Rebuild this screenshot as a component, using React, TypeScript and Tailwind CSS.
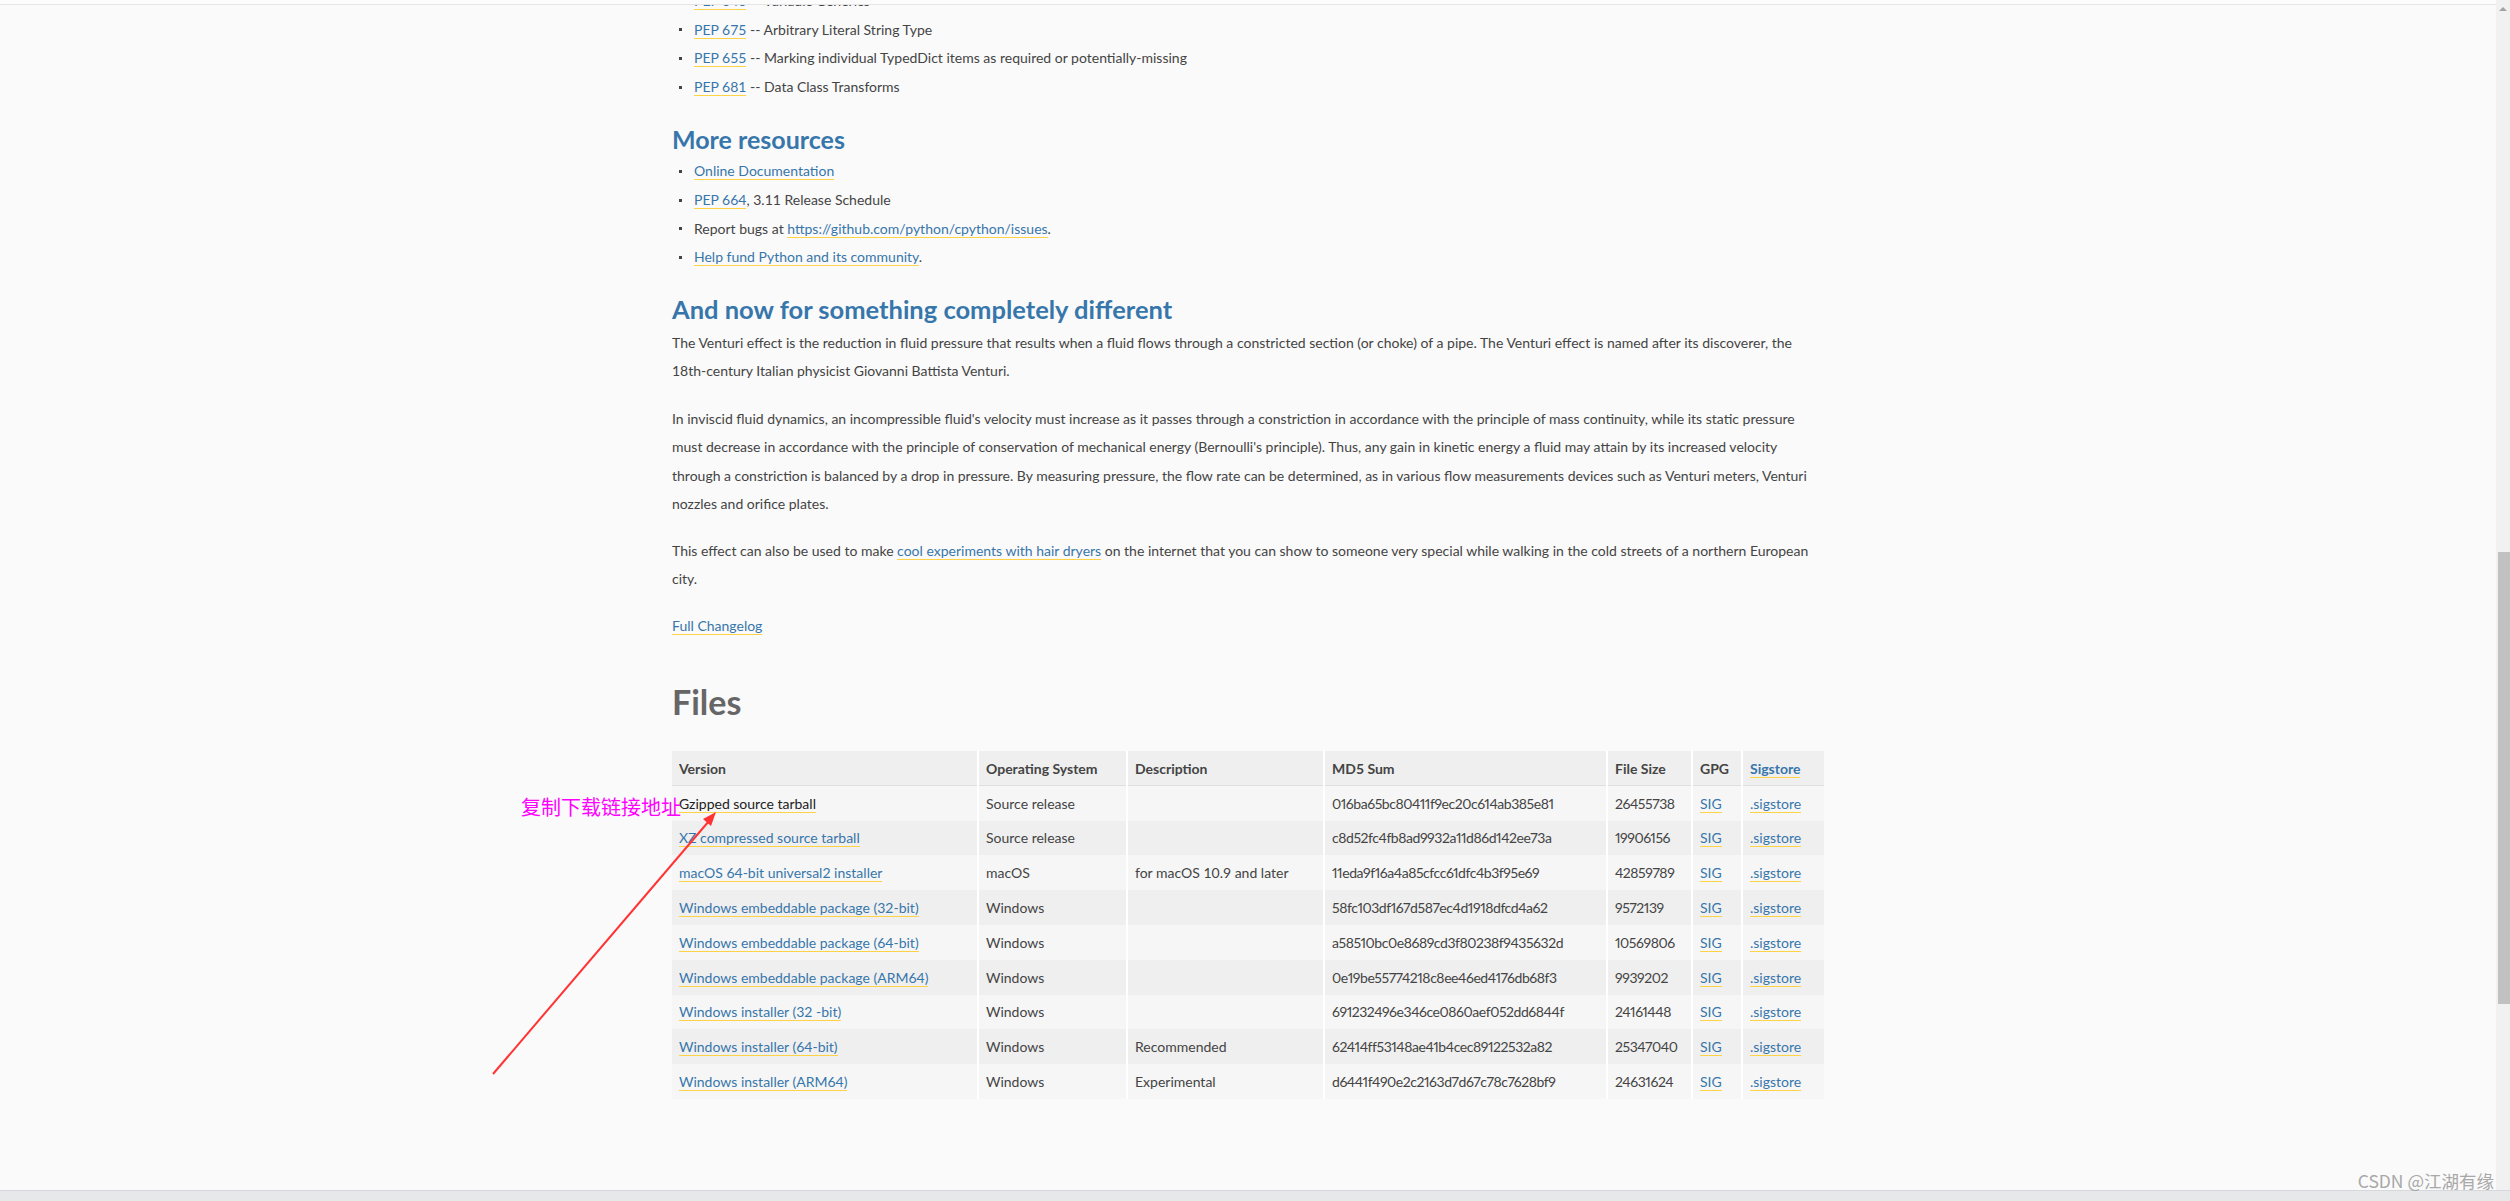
import React from "react";

type FileRow = {
  version: string;
  os: string;
  description: string;
  md5: string;
  size: string;
};

const files: FileRow[] = [
  { version: "Gzipped source tarball", os: "Source release", description: "", md5: "016ba65bc80411f9ec20c614ab385e81", size: "26455738" },
  { version: "XZ compressed source tarball", os: "Source release", description: "", md5: "c8d52fc4fb8ad9932a11d86d142ee73a", size: "19906156" },
  { version: "macOS 64-bit universal2 installer", os: "macOS", description: "for macOS 10.9 and later", md5: "11eda9f16a4a85cfcc61dfc4b3f95e69", size: "42859789" },
  { version: "Windows embeddable package (32-bit)", os: "Windows", description: "", md5: "58fc103df167d587ec4d1918dfcd4a62", size: "9572139" },
  { version: "Windows embeddable package (64-bit)", os: "Windows", description: "", md5: "a58510bc0e8689cd3f80238f9435632d", size: "10569806" },
  { version: "Windows embeddable package (ARM64)", os: "Windows", description: "", md5: "0e19be55774218c8ee46ed4176db68f3", size: "9939202" },
  { version: "Windows installer (32 -bit)", os: "Windows", description: "", md5: "691232496e346ce0860aef052dd6844f", size: "24161448" },
  { version: "Windows installer (64-bit)", os: "Windows", description: "Recommended", md5: "62414ff53148ae41b4cec89122532a82", size: "25347040" },
  { version: "Windows installer (ARM64)", os: "Windows", description: "Experimental", md5: "d6441f490e2c2163d7d67c78c7628bf9", size: "24631624" },
];

const peps = [
  ["PEP 646", "Variadic Generics"],
  ["PEP 675", "Arbitrary Literal String Type"],
  ["PEP 655", "Marking individual TypedDict items as required or potentially-missing"],
  ["PEP 681", "Data Class Transforms"],
];

const Link = ({ children, dark = false }: { children: React.ReactNode; dark?: boolean }) => (
  <a className={`border-b border-[#ffd343] ${dark ? "text-[#222]" : "text-[#3776ab]"}`}>{children}</a>
);

const Item = ({ children }: { children: React.ReactNode }) => (
  <li className="flex h-[28.6px] items-center leading-[28.6px]">
    <span className="ml-[7px] mr-[12px] h-[3px] w-[3px] shrink-0 bg-[#444]" />
    <span className="whitespace-nowrap">{children}</span>
  </li>
);

const Heading = ({ children }: { children: React.ReactNode }) => (
  <h2 className="mt-[22px] mb-[2px] text-[25px] font-bold leading-[32px] text-[#3776ab]">{children}</h2>
);

const Scrollbar = () => (
  <div className="flex w-[14px] shrink-0 flex-col bg-[#f1f1f1]">
    <div className="flex h-[17px] items-center justify-center">
      <div className="h-0 w-0 border-x-[4px] border-b-[4px] border-x-transparent border-b-[#a3a3a3]" />
    </div>
    <div className="h-[535px]" />
    <div className="ml-[2px] h-[452px] w-[12px] bg-[#c1c1c1]" />
  </div>
);

export default function App() {
  return (
    <div className="relative flex h-[1201px] w-[2510px] flex-col overflow-hidden bg-[#fafafa] font-[Lato,sans-serif] text-[14px] text-[#444]">
      <div className="flex min-h-0 flex-1">
        <div className="flex min-w-0 flex-1 flex-col">
          <div className="h-[5px] shrink-0 border-b border-[#e6e6e6] bg-[#fcfcfc]" />
          <div className="min-h-0 flex-1 overflow-hidden">
            <div className="mx-auto w-[1152px]">
              <ul className="mt-[-18px]">
                {peps.map(([pep, title]) => (
                  <Item key={pep}>
                    <Link>{pep}</Link> -- {title}
                  </Item>
                ))}
              </ul>

              <Heading>More resources</Heading>
              <ul>
                <Item>
                  <Link>Online Documentation</Link>
                </Item>
                <Item>
                  <Link>PEP 664</Link>, 3.11 Release Schedule
                </Item>
                <Item>
                  Report bugs at <Link>https://github.com/python/cpython/issues</Link>.
                </Item>
                <Item>
                  <Link>Help fund Python and its community</Link>.
                </Item>
              </ul>

              <h2 className="mt-[21px] mb-[2px] text-[25.5px] font-bold leading-[32px] text-[#3776ab]">
                And now for something completely different
              </h2>
              <p className="mt-[4px] whitespace-nowrap leading-[28.5px]">
                The Venturi effect is the reduction in fluid pressure that results when a fluid flows through a constricted section (or choke) of a pipe. The Venturi effect is named after its discoverer, the
                <br />
                18th-century Italian physicist Giovanni Battista Venturi.
              </p>
              <p className="mt-[19px] whitespace-nowrap leading-[28.5px]">
                In inviscid fluid dynamics, an incompressible fluid's velocity must increase as it passes through a constriction in accordance with the principle of mass continuity, while its static pressure
                <br />
                must decrease in accordance with the principle of conservation of mechanical energy (Bernoulli's principle). Thus, any gain in kinetic energy a fluid may attain by its increased velocity
                <br />
                through a constriction is balanced by a drop in pressure. By measuring pressure, the flow rate can be determined, as in various flow measurements devices such as Venturi meters, Venturi
                <br />
                nozzles and orifice plates.
              </p>
              <p className="mt-[18px] whitespace-nowrap leading-[28.5px]">
                This effect can also be used to make <Link>cool experiments with hair dryers</Link> on the internet that you can show to someone very special while walking in the cold streets of a northern European
                <br />
                city.
              </p>
              <p className="mt-[18px] leading-[28.5px]">
                <Link>Full Changelog</Link>
              </p>

              <h2 className="mt-[39.5px] text-[34px] font-bold leading-[44px] text-[#666]">Files</h2>

              <table className="mt-[27px] w-[1152px] table-fixed border-collapse">
                <colgroup>
                  <col className="w-[306px]" />
                  <col className="w-[149px]" />
                  <col className="w-[197px]" />
                  <col className="w-[283px]" />
                  <col className="w-[85px]" />
                  <col className="w-[50px]" />
                  <col className="w-[82px]" />
                </colgroup>
                <thead>
                  <tr className="h-[35px] border-b border-[#dedede] bg-[#efefef] text-left">
                    <th className="px-[7px] font-bold">Version</th>
                    <th className="border-l-2 border-white px-[7px] font-bold">Operating System</th>
                    <th className="border-l-2 border-white px-[7px] font-bold">Description</th>
                    <th className="border-l-2 border-white px-[7px] font-bold">MD5 Sum</th>
                    <th className="border-l-2 border-white px-[7px] font-bold">File Size</th>
                    <th className="border-l-2 border-white px-[7px] font-bold">GPG</th>
                    <th className="border-l-2 border-white px-[7px] font-bold">
                      <Link>Sigstore</Link>
                    </th>
                  </tr>
                </thead>
                <tbody>
                  {files.map((f, i) => (
                    <tr key={f.version} className="h-[34.8px] odd:bg-[#f6f6f6] even:bg-[#efefef]">
                      <td className="whitespace-nowrap px-[7px]">
                        <Link dark={i === 0}>{f.version}</Link>
                      </td>
                      <td className="border-l-2 border-white px-[7px]">{f.os}</td>
                      <td className="whitespace-nowrap border-l-2 border-white px-[7px]">{f.description}</td>
                      <td className="whitespace-nowrap border-l-2 border-white px-[7px] tracking-[-0.45px] proportional-nums">{f.md5}</td>
                      <td className="border-l-2 border-white px-[7px] tracking-[-0.45px] proportional-nums">{f.size}</td>
                      <td className="border-l-2 border-white px-[7px]">
                        <Link>SIG</Link>
                      </td>
                      <td className="border-l-2 border-white px-[7px]">
                        <Link>.sigstore</Link>
                      </td>
                    </tr>
                  ))}
                </tbody>
              </table>
            </div>
          </div>
        </div>
        <Scrollbar />
      </div>
      <div className="h-[11px] shrink-0 border-t border-[#d5d7db] bg-[#e7e8ea]" />

      {/* screenshot annotation */}
      <div className="absolute left-[521px] top-[795px] font-['Noto_Sans_CJK_SC',sans-serif] text-[20px] leading-[24px] text-[#ff00ff]">
        复制下载链接地址
      </div>
      <svg className="pointer-events-none absolute left-0 top-0" width="2510" height="1201">
        <line x1="493" y1="1074" x2="709" y2="821" stroke="#ff3333" strokeWidth="2" />
        <polygon points="716,812 711,826 703,819" fill="#ff3333" />
      </svg>
      <div className="absolute bottom-[10px] right-[16px] font-['Noto_Sans_CJK_SC',sans-serif] text-[17.5px] leading-[20px] text-[#a8a8a8]">
        CSDN @江湖有缘
      </div>
    </div>
  );
}
